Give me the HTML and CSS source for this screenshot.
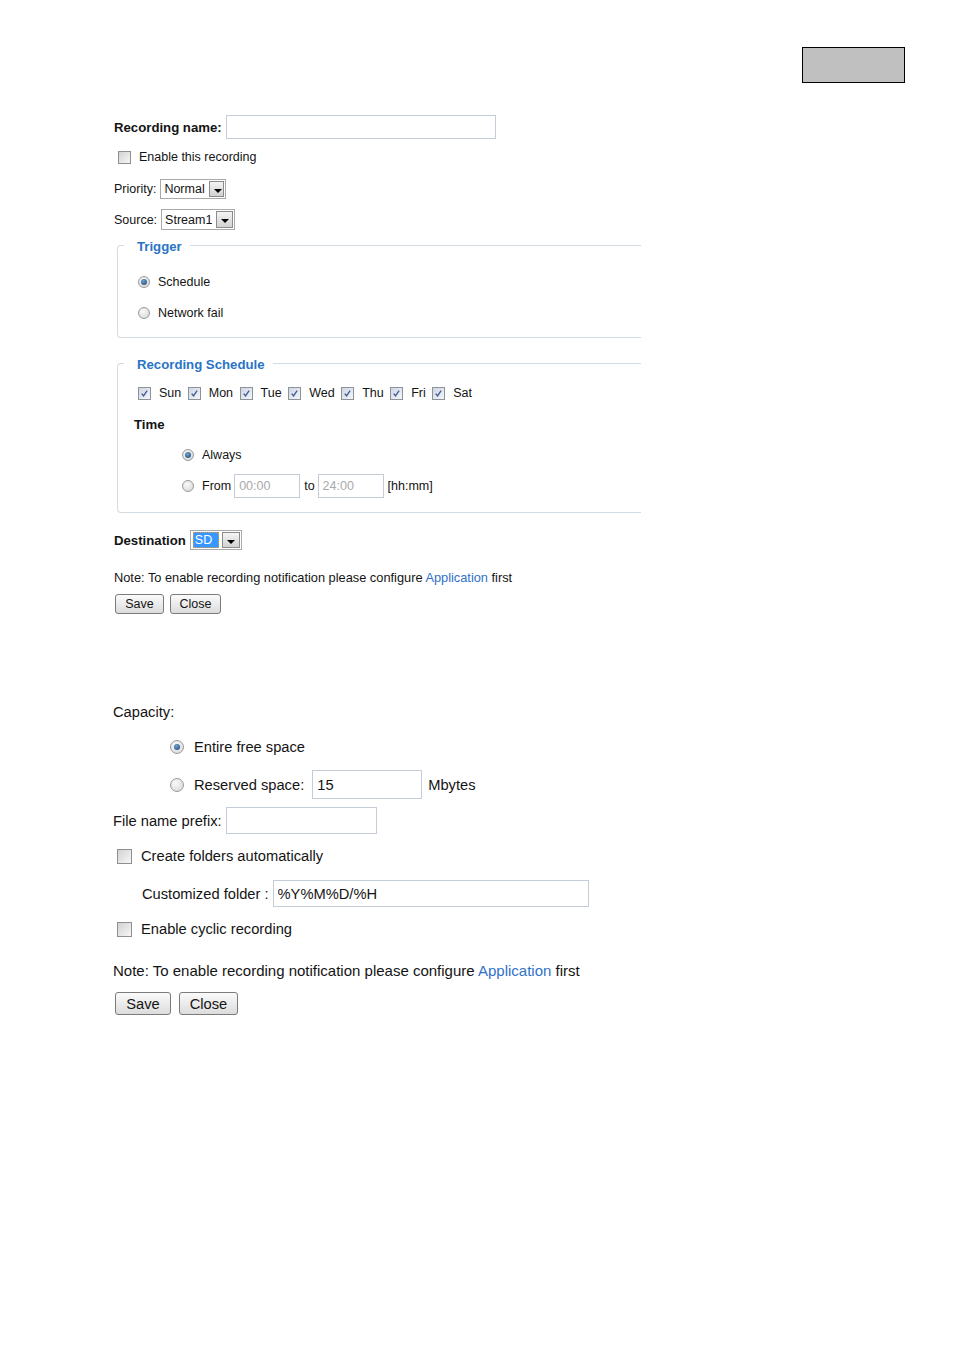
FILE: index.html
```html
<!DOCTYPE html>
<html lang="en">
<head>
    <meta charset="UTF-8">
    <title>Recording Settings</title>
    <link rel="stylesheet" href="styles.css">
</head>
<body>
    <div class="topbar"><div class="pagebox"></div></div>

    <div class="recording">
        <div class="row r-name">
            <span class="lbl-b">Recording name:</span>
            <input type="text" class="txt name-input">
        </div>
        <div class="row r-enable">
            <span class="cb"></span><span>Enable this recording</span>
        </div>
        <div class="row r-priority">
            <span>Priority:</span>
            <span class="select sel-priority"><span class="select-val">Normal</span><span class="select-btn"></span></span>
        </div>
        <div class="row r-source">
            <span>Source:</span>
            <span class="select sel-source"><span class="select-val">Stream1</span><span class="select-btn"></span></span>
        </div>

        <fieldset class="group trigger">
            <legend>Trigger</legend>
            <div class="row r-sched"><span class="rd on"></span><span>Schedule</span></div>
            <div class="row r-netfail"><span class="rd"></span><span>Network fail</span></div>
        </fieldset>

        <fieldset class="group schedule">
            <legend>Recording Schedule</legend>
            <div class="row r-days">
                <span class="cb on"><svg viewBox="0 0 13 13"><path d="M3.2 6.6l2.2 2.6 4.2-6"/></svg></span><span class="day">Sun</span>
                <span class="cb on"><svg viewBox="0 0 13 13"><path d="M3.2 6.6l2.2 2.6 4.2-6"/></svg></span><span class="day">Mon</span>
                <span class="cb on"><svg viewBox="0 0 13 13"><path d="M3.2 6.6l2.2 2.6 4.2-6"/></svg></span><span class="day">Tue</span>
                <span class="cb on"><svg viewBox="0 0 13 13"><path d="M3.2 6.6l2.2 2.6 4.2-6"/></svg></span><span class="day">Wed</span>
                <span class="cb on"><svg viewBox="0 0 13 13"><path d="M3.2 6.6l2.2 2.6 4.2-6"/></svg></span><span class="day">Thu</span>
                <span class="cb on"><svg viewBox="0 0 13 13"><path d="M3.2 6.6l2.2 2.6 4.2-6"/></svg></span><span class="day">Fri</span>
                <span class="cb on"><svg viewBox="0 0 13 13"><path d="M3.2 6.6l2.2 2.6 4.2-6"/></svg></span><span class="day">Sat</span>
            </div>
            <div class="row r-time"><span class="lbl-b">Time</span></div>
            <div class="row r-always indent"><span class="rd on"></span><span>Always</span></div>
            <div class="row r-from indent">
                <span class="rd"></span><span>From</span>
                <input type="text" class="txt time-input" value="00:00">
                <span class="to">to</span>
                <input type="text" class="txt time-input" value="24:00">
                <span class="fmt">[hh:mm]</span>
            </div>
        </fieldset>

        <div class="row r-dest">
            <span class="lbl-b">Destination</span>
            <span class="select sel-dest"><span class="select-val picked">SD</span><span class="select-btn"></span></span>
        </div>
        <div class="row r-note">
            <span>Note: To enable recording notification please configure <a href="#" class="link">Application</a> first</span>
        </div>
        <div class="row r-btns">
            <button class="btn btn-save">Save</button>
            <button class="btn btn-close">Close</button>
        </div>
    </div>

    <div class="storage">
        <div class="row s-capacity"><span>Capacity:</span></div>
        <div class="row s-entire indent-lg"><span class="rd lg on"></span><span>Entire free space</span></div>
        <div class="row s-reserved indent-lg">
            <span class="rd lg"></span><span>Reserved space:</span>
            <input type="text" class="txt reserved-input" value="15">
            <span class="unit">Mbytes</span>
        </div>
        <div class="row s-prefix">
            <span>File name prefix:</span>
            <input type="text" class="txt prefix-input">
        </div>
        <div class="row s-create"><span class="cb lg"></span><span>Create folders automatically</span></div>
        <div class="row s-folder">
            <span>Customized folder :</span>
            <input type="text" class="txt folder-input" value="%Y%M%D/%H">
        </div>
        <div class="row s-cyclic"><span class="cb lg"></span><span>Enable cyclic recording</span></div>
        <div class="row s-note">
            <span>Note: To enable recording notification please configure <a href="#" class="link">Application</a> first</span>
        </div>
        <div class="row s-btns">
            <button class="btn lg btn-save">Save</button>
            <button class="btn lg btn-close">Close</button>
        </div>
    </div>
</body>
</html>
```

FILE: styles.css
```css
body {
    margin: 0;
    font-family: "Liberation Sans", Arial, sans-serif;
    color: #141414;
    background: #fff;
}
.topbar {
    display: flex;
    justify-content: flex-end;
    padding: 47px 49px 0 0;
}
.pagebox {
    width: 101px;
    height: 34px;
    border: 1px solid #000;
    background: #c0c0c0;
}
.row {
    display: flex;
    align-items: center;
    white-space: nowrap;
}
.lbl-b {
    font-weight: bold;
    font-size: 13.2px;
}
.link {
    color: #2f72c8;
    text-decoration: none;
}
.txt {
    box-sizing: border-box;
    border: 1px solid #c4ccd8;
    background: #fff;
    margin: 0;
    padding: 0 4px;
    font-family: "Liberation Sans", Arial, sans-serif;
    color: #141414;
    outline: none;
}

/* checkbox + radio */
.cb {
    box-sizing: border-box;
    width: 13px;
    height: 13px;
    border: 1px solid #8e8f8f;
    background: linear-gradient(135deg, #d2d2d2, #f7f7f7);
    margin: 0 8px 0 4px;
    display: inline-flex;
    flex: none;
}
.cb.on {
    background: linear-gradient(135deg, #cfd6e2, #f4f6fa);
    border-color: #8e939b;
}
.cb svg {
    width: 11px;
    height: 11px;
}
.cb svg path {
    fill: none;
    stroke: #3f5b93;
    stroke-width: 1.6;
}
.cb.lg {
    width: 15px;
    height: 15px;
    margin: 0 9px 0 4px;
}
.rd {
    box-sizing: border-box;
    width: 12px;
    height: 12px;
    border-radius: 50%;
    border: 1px solid #9a9a9a;
    background: radial-gradient(circle at 40% 35%, #fafafa, #d3d3d3);
    margin: 0 8px 0 4px;
    position: relative;
    flex: none;
}
.rd.on::after {
    content: "";
    position: absolute;
    left: 2px;
    top: 2px;
    width: 6px;
    height: 6px;
    border-radius: 50%;
    background: radial-gradient(circle at 40% 35%, #6fa4d2, #173f69);
}
.rd.lg {
    width: 14px;
    height: 14px;
    margin: 0 10px 0 0;
}
.rd.lg.on::after {
    left: 3px;
    top: 3px;
}

/* fake select box */
.select {
    display: inline-flex;
    align-items: stretch;
    box-sizing: border-box;
    height: 20px;
    border: 1px solid #a9a9a9;
    background: #fff;
    margin-left: 4px;
}
.select-val {
    display: flex;
    align-items: center;
    padding: 0 3px;
    flex: 1;
}
.select-val.picked {
    background: #3896ff;
    color: #fff;
    outline: 1px dotted #e39a3c;
    outline-offset: -1px;
    margin: 1px 2px 1px 2px;
    padding: 0 6px 0 2px;
}
.select-btn {
    width: 18px;
    box-sizing: border-box;
    border: 1px solid #8b8b8b;
    background: linear-gradient(#f4f4f4, #d2d2d2);
    margin: 1px;
    position: relative;
}
.select-btn::after {
    content: "";
    position: absolute;
    left: 4px;
    top: 7px;
    border-top: 4px solid #000;
    border-left: 4px solid transparent;
    border-right: 4px solid transparent;
}

/* buttons */
.btn {
    box-sizing: border-box;
    height: 20px;
    border: 1px solid #7b7b7b;
    border-radius: 3px;
    background: linear-gradient(#fbfbfb, #dcdcdc);
    font-family: "Liberation Sans", Arial, sans-serif;
    font-size: 12.5px;
    color: #141414;
    padding: 0;
    margin: 0 5px 0 1px;
}
.btn-save { width: 49px; }
.btn-close { width: 51px; }
.btn.lg {
    height: 23px;
    font-size: 14.7px;
    margin: 0 6px 0 2px;
}
.btn.lg.btn-save { width: 56px; }
.btn.lg.btn-close { width: 59px; }

/* recording section */
.recording {
    padding: 32px 0 0 114px;
    font-size: 12.5px;
}
.r-name { height: 24px; }
.name-input {
    width: 270px;
    height: 24px;
    margin-left: 4px;
}
.r-enable { margin-top: 8px; height: 20px; }
.r-priority { margin-top: 12px; height: 20px; }
.sel-priority { width: 66px; }
.r-source { margin-top: 10px; height: 21px; }
.sel-source { width: 74px; height: 21px; }

.group {
    box-sizing: border-box;
    width: 524px;
    margin: 6px 0 0 3px;
    padding: 0 0 14px 6px;
    border: 1px solid #d3dbe3;
    border-right: none;
    border-radius: 4px 0 0 4px;
}
.group legend {
    padding: 4px 8px 0 13px;
    color: #2a74c5;
    font-weight: bold;
    font-size: 13.2px;
    line-height: 14px;
}
.group .row { margin-left: 10px; }
.r-sched { margin-top: 18px; height: 20px; }
.r-netfail { margin-top: 11px; height: 20px; }

.schedule { margin-top: 16px; padding-bottom: 14px; }
.r-days { margin-top: 11px; height: 20px; }
.day { margin-right: 2.5px; }
.r-time { margin-top: 11px; height: 20px; }
.r-always { margin-top: 11px; height: 20px; }
.r-from { margin-top: 9px; height: 24px; }
.group .indent { margin-left: 54px; }
.time-input {
    width: 66px;
    height: 24px;
    color: #a9a9a9;
    font-size: 12.5px;
}
.r-from .time-input:first-of-type { margin-left: 3px; }
.to { margin: 0 3px 0 4px; }
.fmt { margin-left: 4px; }

.r-dest { margin-top: 17px; height: 20px; }
.sel-dest { width: 52px; }
.r-note { margin-top: 17px; height: 20px; font-size: 12.8px; }
.r-btns { margin-top: 7px; height: 20px; }

/* storage section */
.storage {
    padding: 88px 0 0 113px;
    font-size: 14.7px;
}
.s-capacity { height: 20px; }
.indent-lg { padding-left: 57px; }
.s-entire { margin-top: 15px; height: 20px; }
.s-reserved { margin-top: 13px; height: 29px; }
.reserved-input {
    width: 110px;
    height: 29px;
    margin-left: 8px;
    font-size: 14.7px;
}
.unit { margin-left: 6px; }
.s-prefix { margin-top: 8px; height: 27px; }
.prefix-input {
    width: 151px;
    height: 27px;
    margin-left: 4px;
}
.s-create { margin-top: 12px; height: 20px; }
.s-folder { margin-top: 14px; height: 27px; padding-left: 29px; }
.folder-input {
    width: 316px;
    height: 27px;
    margin-left: 4px;
    font-size: 14.7px;
}
.s-cyclic { margin-top: 12px; height: 20px; }
.s-note { margin-top: 21px; height: 20px; font-size: 15px; }
.s-btns { margin-top: 12px; height: 23px; }
```
